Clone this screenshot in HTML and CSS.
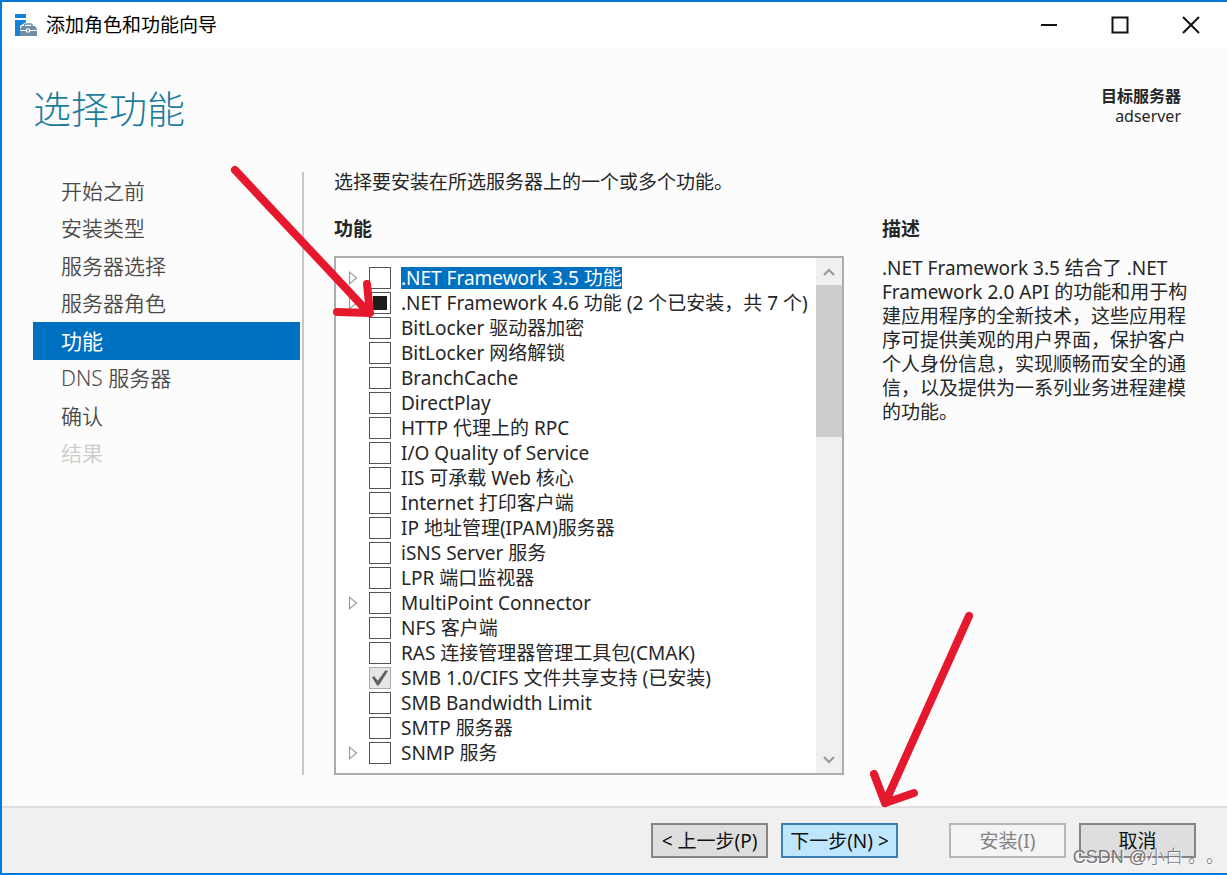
FILE: index.html
```html
<!DOCTYPE html>
<html lang="zh-CN">
<head>
<meta charset="utf-8">
<meta name="viewport" content="width=device-width, initial-scale=1">
<title>添加角色和功能向导</title>
<link rel="stylesheet" href="styles.css">
</head>
<body>
<div class="window">
  <header class="titlebar">
    <svg class="app-icon" width="22" height="22" viewBox="0 0 22 22" aria-hidden="true">
      <path fill="#1583d3" d="M0 0h11v4H0zM0 6h11v2L5 12v10H0z"/>
      <path fill="none" stroke="#6f8da3" stroke-width="1.5" d="M9.500 13v-2.200l1-.900h5.500l1 .900V13"/>
      <path fill="#6f8da3" d="M7 12h13l2 3v7H5v-7z"/>
      <path fill="none" stroke="#fff" d="M5 16.500h6M15 16.500h7M11.500 15v3h3v-3z"/>
    </svg>
    <span class="window-title">添加角色和功能向导</span>
    <div class="window-controls">
      <button type="button" aria-label="最小化"><svg width="18" height="18" viewBox="0 0 18 18"><path d="M1 9h16"/></svg></button>
      <button type="button" aria-label="最大化"><svg width="18" height="18" viewBox="0 0 18 18"><path d="M1.500 1.500h15v15h-15z"/></svg></button>
      <button type="button" aria-label="关闭"><svg width="18" height="18" viewBox="0 0 18 18"><path d="M1 1l16 16M17 1L1 17"/></svg></button>
    </div>
  </header>

  <section class="page-head">
    <h1>选择功能</h1>
    <div class="target"><strong>目标服务器</strong><span>adserver</span></div>
  </section>

  <main class="wizard">
    <nav class="steps" aria-label="步骤">
      <ul>
        <li><a href="#">开始之前</a></li>
        <li><a href="#">安装类型</a></li>
        <li><a href="#">服务器选择</a></li>
        <li><a href="#">服务器角色</a></li>
        <li><a href="#" class="current" aria-current="step">功能</a></li>
        <li><a href="#">DNS 服务器</a></li>
        <li><a href="#">确认</a></li>
        <li><span>结果</span></li>
      </ul>
    </nav>

    <section class="features">
      <p>选择要安装在所选服务器上的一个或多个功能。</p>
      <h2>功能</h2>
      <div class="listbox">
        <ul class="tree">
          <li><svg class="expander" viewBox="0 0 8 12"><path d="M1 1l6 5-6 5z"/></svg><input type="checkbox" id="f1"><label for="f1" class="selected">.NET Framework 3.5 功能</label></li>
          <li><svg class="expander" viewBox="0 0 8 12"><path d="M1 1l6 5-6 5z"/></svg><input type="checkbox" id="f2" class="partial"><label for="f2">.NET Framework 4.6 功能 (2 个已安装，共 7 个)</label></li>
          <li><input type="checkbox" id="f3"><label for="f3">BitLocker 驱动器加密</label></li>
          <li><input type="checkbox" id="f4"><label for="f4">BitLocker 网络解锁</label></li>
          <li><input type="checkbox" id="f5"><label for="f5">BranchCache</label></li>
          <li><input type="checkbox" id="f6"><label for="f6">DirectPlay</label></li>
          <li><input type="checkbox" id="f7"><label for="f7">HTTP 代理上的 RPC</label></li>
          <li><input type="checkbox" id="f8"><label for="f8">I/O Quality of Service</label></li>
          <li><input type="checkbox" id="f9"><label for="f9">IIS 可承载 Web 核心</label></li>
          <li><input type="checkbox" id="f10"><label for="f10">Internet 打印客户端</label></li>
          <li><input type="checkbox" id="f11"><label for="f11">IP 地址管理(IPAM)服务器</label></li>
          <li><input type="checkbox" id="f12"><label for="f12">iSNS Server 服务</label></li>
          <li><input type="checkbox" id="f13"><label for="f13">LPR 端口监视器</label></li>
          <li><svg class="expander" viewBox="0 0 8 12"><path d="M1 1l6 5-6 5z"/></svg><input type="checkbox" id="f14"><label for="f14">MultiPoint Connector</label></li>
          <li><input type="checkbox" id="f15"><label for="f15">NFS 客户端</label></li>
          <li><input type="checkbox" id="f16"><label for="f16">RAS 连接管理器管理工具包(CMAK)</label></li>
          <li><input type="checkbox" id="f17" checked disabled><label for="f17">SMB 1.0/CIFS 文件共享支持 (已安装)</label></li>
          <li><input type="checkbox" id="f18"><label for="f18">SMB Bandwidth Limit</label></li>
          <li><input type="checkbox" id="f19"><label for="f19">SMTP 服务器</label></li>
          <li><svg class="expander" viewBox="0 0 8 12"><path d="M1 1l6 5-6 5z"/></svg><input type="checkbox" id="f20"><label for="f20">SNMP 服务</label></li>
        </ul>
        <div class="scrollbar">
          <button type="button" aria-label="向上滚动"><svg width="14" height="10" viewBox="0 0 14 10"><path d="M2 8l5-5 5 5"/></svg></button>
          <div class="track"><div class="thumb"></div></div>
          <button type="button" aria-label="向下滚动"><svg width="14" height="10" viewBox="0 0 14 10"><path d="M2 2l5 5 5-5"/></svg></button>
        </div>
      </div>
    </section>

    <aside class="description">
      <h2>描述</h2>
      <p>.NET Framework 3.5 结合了 .NET Framework 2.0 API 的功能和用于构建应用程序的全新技术，这些应用程序可提供美观的用户界面，保护客户个人身份信息，实现顺畅而安全的通信，以及提供为一系列业务进程建模的功能。</p>
    </aside>
  </main>

  <footer class="actions">
    <button type="button">&lt; 上一步(P)</button>
    <button type="button" class="primary">下一步(N) &gt;</button>
    <button type="button" class="install" disabled>安装(I)</button>
    <button type="button">取消</button>
  </footer>

  <svg class="annotations" width="1227" height="875" viewBox="0 0 1227 875" aria-hidden="true">
    <path d="M235 170L369 313M367 284L370 313L337 312"/>
    <path d="M969 616L885 803M874 774L885 803L914 793"/>
  </svg>
  <span class="watermark">CSDN @小白 。。</span>
</div>
</body>
</html>
```
FILE: styles.css
```css
* { box-sizing: border-box; }

body {
  margin: 0;
  font-family: "Noto Sans", "Noto Sans CJK SC", sans-serif;
  font-size: 19px;
  line-height: 24px;
  color: #262626;
}

h1, h2, p, ul { margin: 0; padding: 0; font-size: inherit; }
ul { list-style: none; }
a { color: inherit; text-decoration: none; }
button { font: inherit; color: #111; padding: 0; }

.window {
  position: relative;
  display: flex;
  flex-direction: column;
  min-height: 100vh;
  border: 2px solid #0078d7;
  border-right: 0;
  background: #fcfcfc;
  overflow: hidden;
}

.titlebar {
  display: flex;
  align-items: center;
  height: 46px;
  padding-left: 13px;
  background: #fff;
  color: #000;
}
.window-title { margin-left: 9px; }
.window-controls { display: flex; margin-left: auto; padding-right: 1px; }
.window-controls button {
  display: grid;
  place-items: center;
  width: 71px;
  height: 44px;
  border: 0;
  background: none;
}
.window-controls svg { fill: none; stroke: #111; stroke-width: 2; }

.page-head {
  display: flex;
  justify-content: space-between;
  align-items: flex-start;
  height: 122px;
  padding: 36px 46px 0 31px;
}
h1 {
  font-size: 38px;
  line-height: 48px;
  font-weight: 300;
  color: #1d7c9e;
}
.target {
  display: flex;
  flex-direction: column;
  align-items: flex-end;
  font-size: 16px;
  line-height: 20px;
  padding-top: 2px;
}

.wizard {
  flex: 1;
  display: grid;
  grid-template-columns: 271px minmax(0, 1fr) 314px;
  align-items: start;
  padding: 0 31px 31px;
}

.steps {
  align-self: stretch;
  margin-top: 2px;
  padding-right: 2px;
  border-right: 2px solid #c8c8c8;
}
.steps ul {
  display: grid;
  grid-auto-rows: 1fr;
  min-height: 300px;
}
.steps a, .steps span {
  display: flex;
  align-items: center;
  height: 100%;
  padding-left: 28px;
  font-size: 21px;
  font-weight: 350;
  color: #4a4a4a;
}
.steps span { color: #ccc; }
.steps .current { background: #0070c0; color: #fff; font-weight: 400; }

.features { padding: 0 38px 0 30px; }
h2 { font-weight: 700; }
.features h2, .description h2 { margin-bottom: 15px; }
.features p { margin-bottom: 23px; }

.listbox {
  display: flex;
  border: 2px solid #adadad;
  background: #fff;
}
.tree { flex: 1; padding: 7px 0 8px 12px; }
.tree li {
  display: grid;
  grid-template-columns: 21px 22px 1fr;
  align-items: center;
  height: 25px;
}
.tree input { grid-column: 2; }
.tree label {
  grid-column: 3;
  justify-self: start;
  margin-left: 10px;
  line-height: 22px;
  white-space: nowrap;
}
.tree .selected { background: #0070c0; color: #fff; }
.expander {
  width: 10px;
  height: 14px;
  fill: #fff;
  stroke: #999;
  stroke-width: 1;
}

input[type="checkbox"] {
  appearance: none;
  display: grid;
  place-items: center;
  width: 22px;
  height: 22px;
  margin: 0;
  border: 1px solid #555;
  background: #fff;
}
.partial::after { content: ""; width: 14px; height: 14px; background: #1c1c1c; }
input[type="checkbox"]:disabled { border-color: #aaa; background: #e6e6e6; }
input:checked::after {
  content: "";
  width: 16px;
  height: 16px;
  background: #606060;
  clip-path: polygon(0 50%, 14% 42%, 36% 70%, 84% 4%, 100% 10%, 42% 100%, 32% 100%);
}

.scrollbar {
  display: flex;
  flex-direction: column;
  width: 26px;
  background: #f0f0f0;
}
.scrollbar button {
  display: grid;
  place-items: center;
  height: 27px;
  border: 0;
  background: none;
}
.scrollbar svg { fill: none; stroke: #999; stroke-width: 2; }
.track { flex: 1; }
.thumb { height: 33%; background: #cdcdcd; }

.description { padding-top: 47px; }

.actions {
  display: flex;
  justify-content: flex-end;
  gap: 13px;
  padding: 15px 31px;
  border-top: 2px solid #dfdfdf;
  background: #f0f0f0;
}
.actions button {
  width: 117px;
  height: 35px;
  border: 2px solid #858585;
  background: #dedede;
}
.actions .primary { border-color: #3c7fb1; background: #bee6fd; }
.actions .install {
  margin-left: 38px;
  border-color: #b4b8bb;
  background: #f4f4f4;
  color: #838383;
}

.annotations {
  position: absolute;
  left: -2px;
  top: -2px;
  fill: none;
  stroke: #e5182d;
  stroke-width: 8;
  stroke-linecap: round;
  stroke-linejoin: round;
  pointer-events: none;
}
.watermark {
  position: absolute;
  right: 3px;
  bottom: 4px;
  font-family: "Liberation Sans", "Noto Sans CJK SC", sans-serif;
  font-size: 18px;
  font-weight: 300;
  text-spacing-trim: space-all;
  color: #777;
  text-shadow: 1px 1px 0 #fff;
}
```
